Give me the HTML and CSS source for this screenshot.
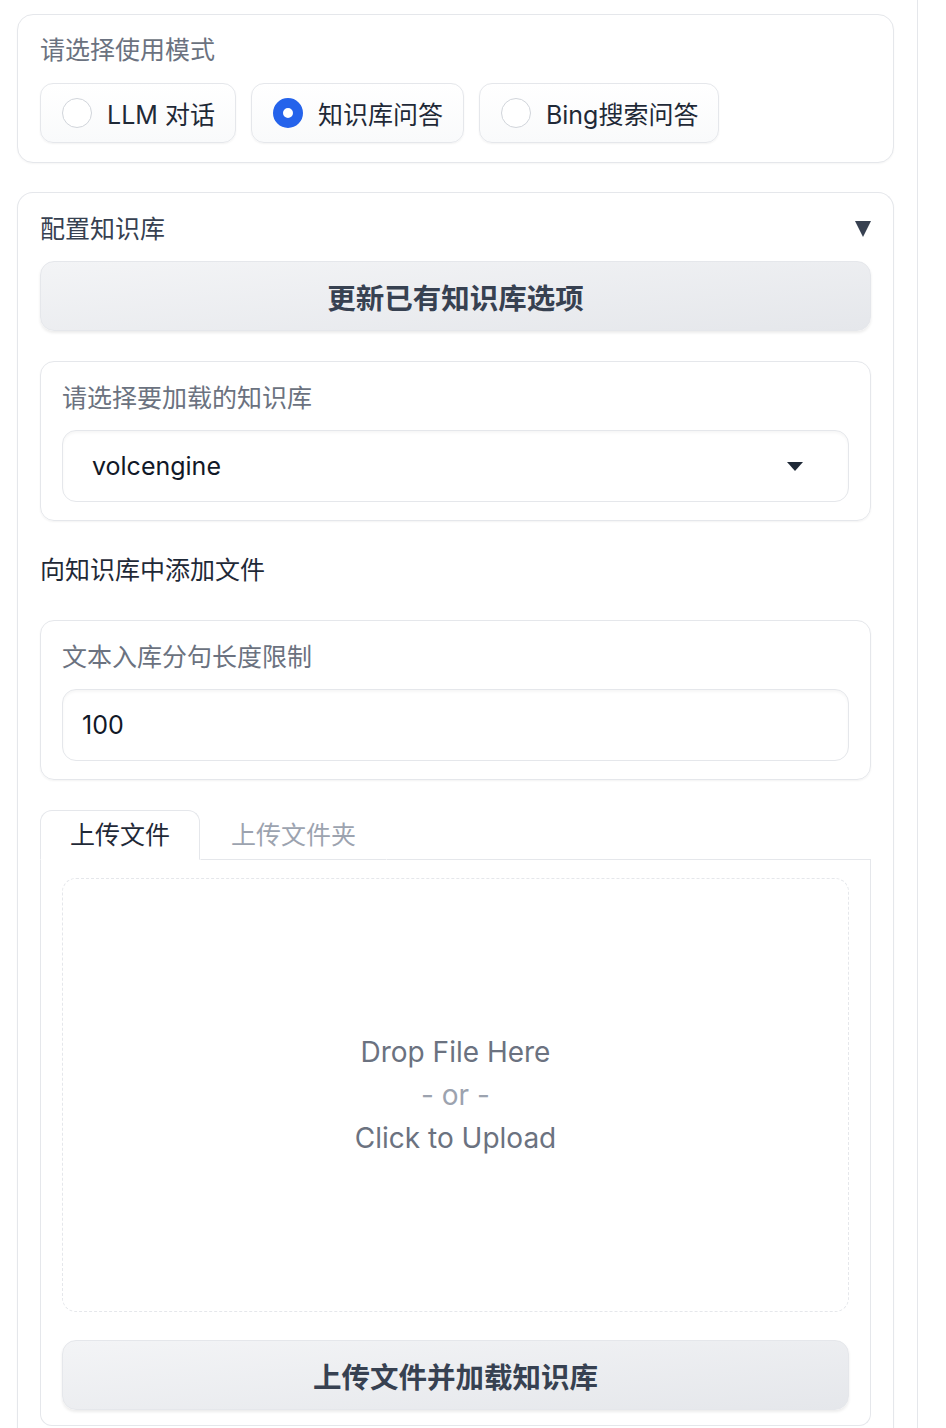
FILE: index.html
```html
<!DOCTYPE html>
<html>
<head>
  <title>知识库问答</title>
  <link rel="stylesheet" href="styles.css">
</head>
<body>
  <div id="page">
    <div class="panel mode-panel">
      <div class="field-label">请选择使用模式</div>
      <div class="radio-row">
        <label class="radio-item"><span class="radio"></span>LLM 对话</label>
        <label class="radio-item"><span class="radio checked"></span>知识库问答</label>
        <label class="radio-item"><span class="radio"></span>Bing搜索问答</label>
      </div>
    </div>

    <div class="panel kb-panel">
      <div class="accordion-head">
        <span>配置知识库</span>
        <svg class="caret" width="16" height="18" viewBox="0 0 16 18"><polygon points="0,1 16,1 8,17" fill="#374151"/></svg>
      </div>

      <button class="big-btn first-btn">更新已有知识库选项</button>

      <div class="box">
        <div class="field-label">请选择要加载的知识库</div>
        <div class="input select">
          <span>volcengine</span>
          <svg width="16" height="9" viewBox="0 0 16 9"><polygon points="0,0 16,0 8,9" fill="#1f2937"/></svg>
        </div>
      </div>

      <div class="section-title">向知识库中添加文件</div>

      <div class="box">
        <div class="field-label">文本入库分句长度限制</div>
        <div class="input number">100</div>
      </div>

      <div class="tabs">
        <div class="tab-bar">
          <div class="tab active">上传文件</div>
          <div class="tab">上传文件夹</div>
          <div class="tab-fill"></div>
        </div>
        <div class="tab-body">
          <div class="dropzone">
            <div class="drop-main">Drop File Here</div>
            <div class="drop-or">- or -</div>
            <div class="drop-main">Click to Upload</div>
          </div>
          <button class="big-btn">上传文件并加载知识库</button>
        </div>
      </div>
    </div>
  </div>
</body>
</html>
```

FILE: styles.css
```css
html, body {
  margin: 0;
  padding: 0;
  background: #fff;
}
body {
  font-family: Inter, "Noto Sans CJK SC", sans-serif;
  color: #1f2937;
  overflow: hidden;
}
#page {
  width: 918px;
  height: 1428px;
  box-sizing: border-box;
  border-right: 1px solid #e5e7eb;
  padding: 14px 23px 0 17px;
  display: flex;
  flex-direction: column;
  gap: 29px;
}
.panel {
  border: 1px solid #e5e7eb;
  border-radius: 16px;
  background: #fff;
  box-shadow: 0 1px 2px rgba(0, 0, 0, 0.04);
  padding: 18px 22px 19px 22px;
}
.field-label {
  font-size: 25px;
  line-height: 34px;
  color: #6b7280;
}
.radio-row {
  display: flex;
  gap: 15px;
  margin-top: 16px;
}
.radio-item {
  display: flex;
  align-items: center;
  gap: 15px;
  height: 60px;
  box-sizing: border-box;
  padding: 0 20px 0 21px;
  border: 1px solid #e5e7eb;
  border-radius: 13px;
  background: linear-gradient(to bottom, #fff, #f9fafb);
  box-shadow: 0 1px 2px rgba(0, 0, 0, 0.05);
  font-size: 25px;
  color: #1f2937;
}
.radio {
  width: 30px;
  height: 30px;
  box-sizing: border-box;
  border-radius: 50%;
  border: 1px solid #d1d5db;
  background: #fff;
}
.radio.checked {
  border: 10px solid #2563eb;
  background: #fff;
}
.kb-panel {
  flex: 1;
  border-bottom: none;
  border-radius: 16px 16px 0 0;
  padding-top: 19px;
  padding-bottom: 0;
  display: flex;
  flex-direction: column;
}
.accordion-head {
  display: flex;
  justify-content: space-between;
  align-items: center;
  font-size: 25px;
  line-height: 34px;
  color: #374151;
}
.big-btn {
  display: block;
  width: 100%;
  height: 70px;
  flex: none;
  border: 1px solid #e5e7eb;
  border-radius: 14px;
  background: linear-gradient(to bottom right, #f3f4f6, #e5e7eb);
  box-shadow: 0 2px 3px rgba(0, 0, 0, 0.08);
  font-family: Inter, "Noto Sans CJK SC", sans-serif;
  font-size: 28.5px;
  font-weight: 700;
  color: #374151;
}
.first-btn {
  margin-top: 15px;
}
.box {
  margin-top: 30px;
  border: 1px solid #e5e7eb;
  border-radius: 14px;
  box-shadow: 0 1px 2px rgba(0, 0, 0, 0.05);
  padding: 19px 21px 18px 21px;
}
.input {
  margin-top: 15px;
  height: 72px;
  box-sizing: border-box;
  border: 1px solid #e5e7eb;
  border-radius: 14px;
  box-shadow: inset 0 2px 3px rgba(0, 0, 0, 0.04);
  display: flex;
  align-items: center;
  font-size: 25px;
  color: #111827;
}
.select {
  justify-content: space-between;
  padding: 0 45px 0 29px;
}
.number {
  padding: 0 19px;
}
.section-title {
  margin-top: 32px;
  font-size: 25px;
  line-height: 34px;
  color: #1f2937;
}
.section-title + .box {
  margin-top: 33px;
}
.tabs {
  margin-top: 30px;
  display: flex;
  flex-direction: column;
}
.tab-bar {
  display: flex;
  height: 50px;
}
.tab {
  font-size: 25px;
  line-height: 48px;
  padding: 0 30px;
  color: #9ca3af;
  border: 1px solid transparent;
  border-bottom: 1px solid #e5e7eb;
}
.tab.active {
  color: #1f2937;
  border: 1px solid #e5e7eb;
  border-bottom-color: #fff;
  border-radius: 12px 12px 0 0;
  padding: 0 29px;
}
.tab-fill {
  flex: 1;
  border-bottom: 1px solid #e5e7eb;
}
.tab-body {
  border: 1px solid #e5e7eb;
  border-top: none;
  border-radius: 0 0 12px 12px;
  padding: 18px 21px 15px 21px;
  display: flex;
  flex-direction: column;
}
.dropzone {
  height: 434px;
  box-sizing: border-box;
  border: 1px dashed #e5e7eb;
  border-radius: 14px;
  display: flex;
  flex-direction: column;
  align-items: center;
  justify-content: center;
  font-size: 28px;
  line-height: 43px;
  margin-bottom: 28px;
}
.drop-main {
  color: #6b7280;
}
.drop-or {
  color: #9ca3af;
}
```
